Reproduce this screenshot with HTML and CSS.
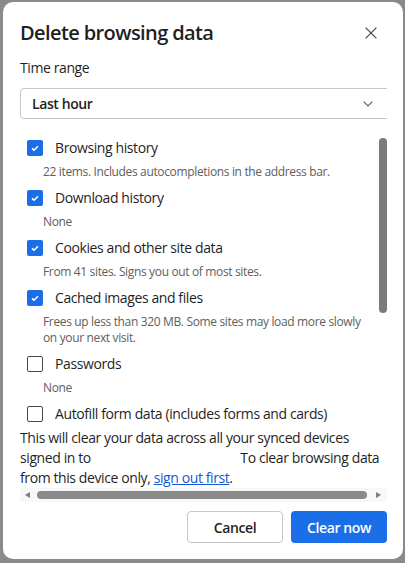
FILE: index.html
```html
<!DOCTYPE html>
<html lang="en">
<head>
<meta charset="utf-8">
<title>Delete browsing data</title>
<link rel="stylesheet" href="styles.css">
</head>
<body>
<div class="dialog">
  <div class="header">
    <h1 class="title">Delete browsing data</h1>
    <svg class="close" width="12" height="12" viewBox="0 0 12 12" aria-label="Close">
      <path d="M0.6 0.6 L11.4 11.4 M11.4 0.6 L0.6 11.4" stroke="#474747" stroke-width="1.2" fill="none"/>
    </svg>
  </div>

  <div class="field-label">Time range</div>
  <div class="select-clip">
    <div class="select">
      <span class="select-value">Last hour</span>
      <svg class="chevron" width="10" height="6" viewBox="0 0 10 6">
        <path d="M0.7 0.7 L5 5 L9.3 0.7" stroke="#5f5f5f" stroke-width="1.1" fill="none"/>
      </svg>
    </div>
  </div>

  <div class="list-wrap">
    <div class="list">
      <div class="item">
        <div class="item-row"><span class="cb on"><svg width="16" height="16" viewBox="0 0 16 16"><path d="M5 8.3 L7 10.2 L11 6.2" stroke="#fff" stroke-width="1.6" fill="none"/></svg></span><span class="item-label">Browsing history</span></div>
        <div class="item-sub">22 items. Includes autocompletions in the address bar.</div>
      </div>
      <div class="item">
        <div class="item-row"><span class="cb on"><svg width="16" height="16" viewBox="0 0 16 16"><path d="M5 8.3 L7 10.2 L11 6.2" stroke="#fff" stroke-width="1.6" fill="none"/></svg></span><span class="item-label">Download history</span></div>
        <div class="item-sub">None</div>
      </div>
      <div class="item">
        <div class="item-row"><span class="cb on"><svg width="16" height="16" viewBox="0 0 16 16"><path d="M5 8.3 L7 10.2 L11 6.2" stroke="#fff" stroke-width="1.6" fill="none"/></svg></span><span class="item-label">Cookies and other site data</span></div>
        <div class="item-sub">From 41 sites. Signs you out of most sites.</div>
      </div>
      <div class="item">
        <div class="item-row"><span class="cb on"><svg width="16" height="16" viewBox="0 0 16 16"><path d="M5 8.3 L7 10.2 L11 6.2" stroke="#fff" stroke-width="1.6" fill="none"/></svg></span><span class="item-label">Cached images and files</span></div>
        <div class="item-sub">Frees up less than 320 MB. Some sites may load more slowly on your next visit.</div>
      </div>
      <div class="item">
        <div class="item-row"><span class="cb"></span><span class="item-label">Passwords</span></div>
        <div class="item-sub">None</div>
      </div>
      <div class="item">
        <div class="item-row"><span class="cb"></span><span class="item-label">Autofill form data (includes forms and cards)</span></div>
      </div>
    </div>
    <div class="vscroll"><div class="vthumb"></div></div>
  </div>

  <p class="sync-note">This will clear your data across all your synced devices signed in to <span class="redacted"></span> To clear browsing data from this device only, <a class="link" href="#">sign out first</a>.</p>

  <div class="hscroll">
    <span class="arrow-left"></span>
    <div class="hthumb"></div>
    <span class="arrow-right"></span>
  </div>

  <div class="footer">
    <button class="btn btn-cancel">Cancel</button>
    <button class="btn btn-primary">Clear now</button>
  </div>
</div>
</body>
</html>
```

FILE: styles.css
```css
html, body {
  margin: 0;
  padding: 0;
  background: #8a8a8a;
  height: 100%;
}

body {
  font-family: "Open Sans", "Noto Sans", sans-serif;
  color: #1f1f1f;
  padding-top: 2px;
  box-sizing: border-box;
  letter-spacing: -0.4px;
}

.dialog {
  margin-left: 3px;
  width: 400px;
  background: #fff;
  border-radius: 10px;
  padding: 17px 16px 16px 17px;
  box-sizing: border-box;
}

.header {
  display: flex;
  align-items: center;
  justify-content: space-between;
  height: 28px;
}

.title {
  margin: 0;
  font-size: 20px;
  font-weight: 600;
  line-height: 28px;
  letter-spacing: -0.6px;
  color: #1f1f1f;
}

.close {
  margin-right: 10px;
  display: block;
}

.field-label {
  margin-top: 11px;
  font-size: 14px;
  line-height: 20px;
}

.select-clip {
  margin-top: 10px;
  overflow: hidden;
}

.select {
  width: calc(100% + 12px);
  height: 31px;
  box-sizing: border-box;
  border: 1px solid #c7c7c7;
  border-radius: 4px;
  display: flex;
  align-items: center;
  justify-content: space-between;
  padding: 0 25px 0 11px;
}

.select-value {
  font-size: 14px;
  font-weight: 600;
  line-height: 20px;
}

.chevron {
  display: block;
}

.list-wrap {
  margin-top: 12px;
  height: 297px;
  display: flex;
  overflow: hidden;
}

.list {
  flex: 1;
  min-width: 0;
}

.item-row {
  height: 33px;
  display: flex;
  align-items: center;
  padding-left: 7px;
  gap: 12px;
}

.cb {
  width: 16px;
  height: 16px;
  box-sizing: border-box;
  border: 1.5px solid #474747;
  border-radius: 2px;
  flex: none;
}

.cb.on {
  border: none;
  background: #1a6fe8;
}

.cb svg {
  display: block;
}

.item-label {
  font-size: 14px;
  line-height: 20px;
  white-space: nowrap;
}

.item-sub {
  margin-left: 23px;
  font-size: 12px;
  line-height: 16px;
  letter-spacing: -0.35px;
  padding-bottom: 1px;
  color: #5e5e5e;
  padding-right: 8px;
}

.vscroll {
  width: 8px;
  flex: none;
}

.vthumb {
  margin-top: 7px;
  height: 175px;
  background: #7b7b7b;
  border-radius: 4px;
}

.sync-note {
  margin: 0;
  font-size: 14px;
  line-height: 20px;
}

.redacted {
  display: inline-block;
  width: 143px;
}

.link {
  color: #1558d6;
  text-decoration: underline;
}

.hscroll {
  height: 14px;
  background: #f8f8f8;
  display: flex;
  align-items: center;
}

.arrow-left {
  margin-left: 5px;
  width: 0;
  height: 0;
  border-top: 3.5px solid transparent;
  border-bottom: 3.5px solid transparent;
  border-right: 5px solid #7e7e7e;
}

.hthumb {
  flex: 1;
  height: 8px;
  margin: 0 9px 0 7px;
  background: #8a8a8a;
  border-radius: 4px;
}

.arrow-right {
  margin-right: 6px;
  width: 0;
  height: 0;
  border-top: 3.5px solid transparent;
  border-bottom: 3.5px solid transparent;
  border-left: 5px solid #7e7e7e;
}

.footer {
  margin-top: 9px;
  display: flex;
  justify-content: flex-end;
  gap: 8px;
}

.btn {
  width: 96px;
  height: 32px;
  border-radius: 4px;
  font-family: inherit;
  font-size: 14px;
  font-weight: 600;
  letter-spacing: -0.4px;
  cursor: pointer;
}

.btn-cancel {
  background: #fff;
  border: 1px solid #c7c7c7;
  color: #1f1f1f;
}

.btn-primary {
  background: #1a6fe8;
  border: none;
  color: #fff;
}
```
